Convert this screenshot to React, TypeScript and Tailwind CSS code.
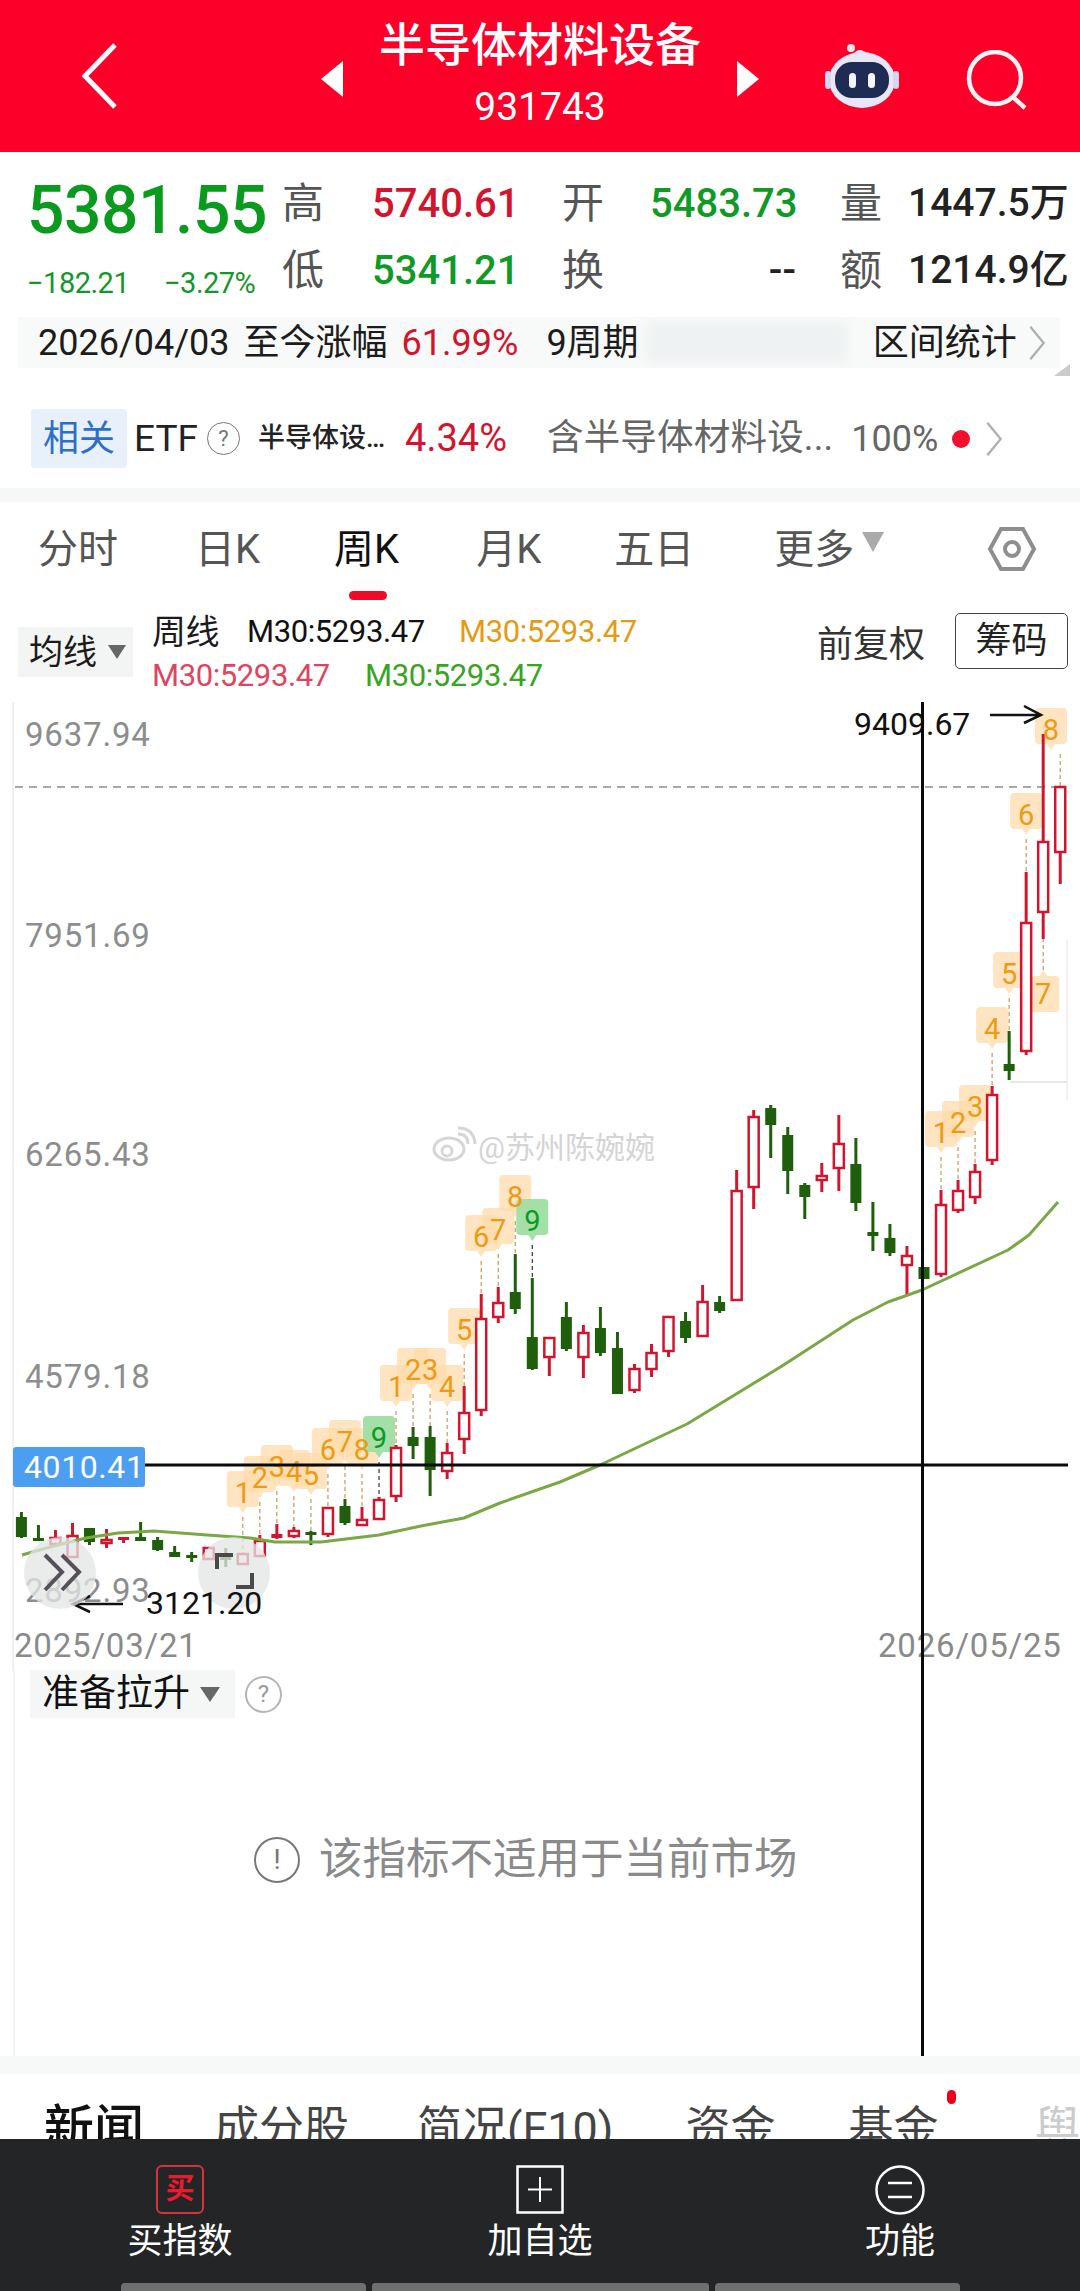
import React from "react";

type Candle = [number, number, number, number, "r" | "g"];

// wick top, body top, body bottom, wick bottom (page y)
const candles: Candle[] = [
  [1512, 1517, 1537, 1538, "g"], [1525, 1538, 1541, 1541, "g"], [1530, 1537, 1545, 1545, "r"], [1523, 1535, 1558, 1558, "r"],
  [1528, 1528, 1542, 1545, "g"], [1529, 1539, 1544, 1548, "r"], [1537, 1537, 1540, 1543, "r"], [1522, 1537, 1541, 1541, "g"],
  [1537, 1540, 1550, 1551, "g"], [1546, 1552, 1557, 1557, "g"], [1552, 1555, 1558, 1562, "g"], [1547, 1547, 1560, 1560, "r"],
  [1548, 1553, 1560, 1567, "g"], [1553, 1553, 1565, 1565, "r"], [1535, 1540, 1557, 1557, "r"], [1524, 1534, 1538, 1539, "r"],
  [1527, 1530, 1537, 1538, "r"], [1531, 1532, 1533, 1545, "g"], [1507, 1507, 1535, 1537, "r"], [1499, 1506, 1523, 1525, "g"],
  [1507, 1519, 1526, 1526, "r"], [1497, 1499, 1520, 1520, "r"], [1445, 1447, 1497, 1502, "r"], [1427, 1437, 1446, 1459, "g"],
  [1426, 1437, 1470, 1496, "g"], [1443, 1452, 1472, 1479, "r"], [1386, 1412, 1440, 1454, "r"], [1294, 1318, 1411, 1416, "r"],
  [1287, 1302, 1318, 1323, "r"], [1254, 1292, 1309, 1314, "g"], [1278, 1337, 1369, 1370, "g"], [1337, 1337, 1358, 1376, "r"],
  [1302, 1317, 1349, 1351, "g"], [1325, 1332, 1358, 1378, "r"], [1307, 1328, 1353, 1356, "g"], [1332, 1348, 1394, 1394, "g"],
  [1364, 1368, 1391, 1393, "r"], [1344, 1352, 1370, 1377, "r"], [1316, 1316, 1352, 1357, "r"], [1312, 1321, 1338, 1343, "g"],
  [1285, 1301, 1337, 1337, "r"], [1296, 1302, 1311, 1313, "g"], [1170, 1190, 1301, 1301, "r"], [1110, 1116, 1188, 1209, "r"],
  [1105, 1108, 1125, 1158, "g"], [1127, 1135, 1171, 1194, "g"], [1183, 1185, 1197, 1219, "g"], [1163, 1175, 1181, 1192, "r"],
  [1115, 1143, 1169, 1191, "r"], [1138, 1164, 1203, 1211, "g"], [1202, 1232, 1236, 1251, "g"], [1224, 1238, 1253, 1256, "g"],
  [1246, 1255, 1266, 1294, "r"], [1267, 1267, 1279, 1279, "g"], [1190, 1204, 1275, 1277, "r"], [1180, 1190, 1211, 1213, "r"],
  [1164, 1171, 1198, 1204, "r"], [1086, 1094, 1161, 1165, "r"], [1031, 1064, 1071, 1080, "g"], [872, 922, 1052, 1055, "r"],
  [734, 841, 913, 939, "r"], [786, 786, 853, 884, "r"],
];

const candleX = (i: number) => 21.4 + 17.03 * i;

// candle index, badge centre y, digit, optional centre x
const badges: { i: number; y: number; d: number; x?: number; up?: boolean }[] = [
  { i: 13, y: 1493, d: 1 }, { i: 14, y: 1478, d: 2 }, { i: 15, y: 1467, d: 3 }, { i: 16, y: 1472, d: 4 },
  { i: 17, y: 1475, d: 5 }, { i: 18, y: 1450, d: 6 }, { i: 19, y: 1442, d: 7 }, { i: 20, y: 1450, d: 8 },
  { i: 21, y: 1438, d: 9 }, { i: 22, y: 1387, d: 1 }, { i: 23, y: 1370, d: 2 }, { i: 24, y: 1370, d: 3 },
  { i: 25, y: 1387, d: 4 }, { i: 26, y: 1330, d: 5 }, { i: 27, y: 1237, d: 6 }, { i: 28, y: 1230, d: 7 },
  { i: 29, y: 1197, d: 8 }, { i: 30, y: 1221, d: 9 }, { i: 54, y: 1133, d: 1 }, { i: 55, y: 1123, d: 2 },
  { i: 56, y: 1107, d: 3 }, { i: 57, y: 1029, d: 4 }, { i: 58, y: 974, d: 5 }, { i: 59, y: 815, d: 6 },
  { i: 60, y: 994, d: 7, up: true }, { i: 61, y: 730, d: 8, x: 1051 },
];

const maLine =
  "22,1555 50,1547 86,1538 118,1533 154,1531 207,1535 250,1538 275,1542 321,1542 379,1535 421,1526 464,1518 500,1503 560,1482 600,1465 687,1424 782,1366 853,1320 888,1302 922,1290 1008,1250 1029,1235 1058,1202";

const axis: [string, number][] = [
  ["9637.94", 746], ["7951.69", 947], ["6265.43", 1166], ["4579.18", 1388], ["2892.93", 1602],
];

function Badge({ x, y, green, up }: { x: number; y: number; green: boolean; up?: boolean }) {
  const fill = green ? "#a3dfa6" : "#fdd9a8";
  const d = up
    ? `M${x - 16} ${y - 14}q0-4 4-4h8l4-6 4 6h8q4 0 4 4v28q0 4-4 4h-24q-4 0-4-4z`
    : `M${x - 16} ${y - 18}q0-4 4-4h24q4 0 4 4v28q0 4-4 4h-8l-4 6-4-6h-8q-4 0-4-4z`;
  return <path d={d} fill={fill} opacity={green ? 1 : 0.72} />;
}

function Chart() {
  return (
    <svg className="block w-[1080px] h-[968px]" viewBox="0 702 1080 968">
      <line x1="13" y1="702" x2="13" y2="1670" stroke="#f0f0f0" strokeWidth="2" />
      <line x1="1067" y1="940" x2="1067" y2="1100" stroke="#f1f1f1" strokeWidth="2" />
      <line x1="1010" y1="1082" x2="1067" y2="1082" stroke="#e8e8e8" strokeWidth="2" />

      {/* watermark */}
      <g fill="none" stroke="#d6d6d6" strokeWidth="3">
        <ellipse cx="449" cy="1149" rx="15" ry="11" />
        <circle cx="447" cy="1151" r="5" />
        <path d="M458 1134q10 0 10 10M458 1128q16 0 17 16" />
      </g>
      <text x="478" y="1158" fontSize="30" fill="#d4d4d4">@苏州陈婉婉</text>

      {axis.map(([t, y]) => (
        <text key={t} x="25" y={y} fontSize="33" fill="#8d8d8d" letterSpacing="0.8">{t}</text>
      ))}

      <line x1="15" y1="787" x2="1065" y2="787" stroke="#a8a8a8" strokeWidth="2" strokeDasharray="8 6" />

      {badges.map((b, n) => (
        <Badge key={n} x={b.x ?? candleX(b.i)} y={b.y} green={b.d === 9} up={b.up} />
      ))}

      {badges.map((b, n) => {
        const x = candleX(b.i);
        const c = candles[b.i];
        const from = b.up ? b.y - 24 : b.y + 24;
        const to = b.up ? c[3] : c[0];
        return (
          <line key={n} x1={x} y1={from} x2={x} y2={to} stroke={b.d === 9 ? "#333" : "#c9975a"} strokeWidth="1.2" strokeDasharray="4 3" />
        );
      })}

      {candles.map(([wt, bt, bb, wb, kind], i) => {
        const x = candleX(i);
        const color = kind === "r" ? "#d2152f" : "#1f5f0c";
        const h = bb - bt;
        return (
          <g key={i}>
            <line x1={x} y1={wt} x2={x} y2={wb} stroke={color} strokeWidth="3" />
            {kind === "g" || h < 5 ? (
              <rect x={x - 5.5} y={bt} width="11" height={Math.max(h, 3)} fill={color} />
            ) : (
              <rect x={x - 5} y={bt + 1} width="10" height={h - 2} fill="#fff" stroke={color} strokeWidth="2.5" />
            )}
          </g>
        );
      })}

      <polyline points={maLine} fill="none" stroke="#7aa845" strokeWidth="3" strokeLinejoin="round" />

      {badges.map((b, n) => (
        <text
          key={n}
          x={b.x ?? candleX(b.i)}
          y={b.y + 10}
          fontSize="29"
          textAnchor="middle"
          fill={b.d === 9 ? "#0c9a22" : "#ee9a14"}
        >
          {b.d}
        </text>
      ))}

      <line x1="145" y1="1465" x2="1068" y2="1465" stroke="#0a0a0a" strokeWidth="3" />
      <rect x="13" y="1447" width="132" height="40" rx="3" fill="#4c9ef0" />
      <text x="24" y="1478" fontSize="32" fill="#fff" letterSpacing="0.6">4010.41</text>

      {/* high / low markers */}
      <text x="854" y="735" fontSize="32" fill="#111">9409.67</text>
      <path d="M990 715h50M1024 706l17 9-17 8" fill="none" stroke="#111" strokeWidth="2.5" />
      <path d="M73 1604h50M90 1596l-17 8 17 8" fill="none" stroke="#111" strokeWidth="2.5" />

      {/* scroll buttons */}
      <circle cx="60" cy="1573" r="36" fill="#e3e5e5" opacity="0.76" />
      <circle cx="234" cy="1573" r="36" fill="#e3e5e5" opacity="0.76" />
      <path d="M45 1555l17 17-17 18M62 1555l17 17-17 18" fill="none" stroke="#55505a" strokeWidth="4" />
      <path d="M217 1569v-14h16M252 1573v14h-16" fill="none" stroke="#4a4a4a" strokeWidth="4" />
      <text x="146" y="1614" fontSize="32" fill="#111">3121.20</text>

      <text x="14" y="1657" fontSize="33" fill="#8a8a8a" letterSpacing="0.8">2025/03/21</text>
      <text x="878" y="1657" fontSize="33" fill="#8a8a8a" letterSpacing="0.8">2026/05/25</text>
    </svg>
  );
}

function Chevron({ className }: { className: string }) {
  return (
    <svg className={className} viewBox="0 0 20 40" fill="none" stroke="#b0b0b0" strokeWidth="2.5">
      <path d="M3 3l14 17-14 17" />
    </svg>
  );
}

function Stat({ label, value, color }: { label: string; value: string; color: string }) {
  return (
    <>
      <span className="text-[42px] leading-[67px] text-[#555]">{label}</span>
      <span className={`text-[40px] leading-[67px] font-medium text-right pr-[44px] ${color}`}>{value}</span>
    </>
  );
}

export default function App() {
  return (
    <div className="relative w-[1080px] h-[2291px] overflow-hidden bg-white flex flex-col font-['Roboto','Noto_Sans_CJK_SC',sans-serif]">
      {/* header */}
      <div className="h-[152px] bg-[#fc0029] grid grid-cols-[300px_480px_300px] shrink-0">
        <div className="pl-[80px] flex items-center">
          <svg className="w-[38px] h-[68px]" viewBox="0 0 38 68" fill="none" stroke="#fff" strokeWidth="5">
            <path d="M35 3L5 34l30 31" />
          </svg>
        </div>
        <div className="flex items-center justify-center gap-[34px]">
          <div className="w-0 h-0 mt-[6px] border-y-[18px] border-y-transparent border-r-[22px] border-r-white" />
          <div className="flex flex-col items-center text-white w-[326px]">
            <span className="text-[46px] leading-[56px] font-medium whitespace-nowrap mt-[-4px]">半导体材料设备</span>
            <span className="text-[39px] leading-[48px] mt-[10px]">931743</span>
          </div>
          <div className="w-0 h-0 mt-[6px] border-y-[18px] border-y-transparent border-l-[22px] border-l-white" />
        </div>
        <div className="flex items-start pt-[43px] pl-[45px]">
          <svg className="w-[74px] h-[66px]" viewBox="0 0 74 66">
            <path d="M28 14q4-8 10-5 4 2 5 7" fill="none" stroke="#f3eaf5" strokeWidth="2.5" />
            <circle cx="26" cy="5" r="4" fill="#f6e6ec" />
            <ellipse cx="37" cy="37" rx="33" ry="28" fill="#e9e6f7" />
            <rect x="0" y="28" width="6" height="18" rx="3" fill="#d8d6ef" />
            <rect x="68" y="28" width="6" height="18" rx="3" fill="#d8d6ef" />
            <rect x="10" y="19" width="54" height="36" rx="17" fill="#1d2b55" />
            <rect x="24" y="30" width="7" height="15" rx="3.5" fill="#f4f4ff" />
            <rect x="43" y="30" width="7" height="15" rx="3.5" fill="#f4f4ff" />
          </svg>
          <svg className="w-[62px] h-[60px] ml-[67px] mt-[7px]" viewBox="0 0 62 60" fill="none" stroke="#fff4f4" strokeWidth="4.5">
            <circle cx="29" cy="28" r="26" />
            <path d="M47 47l12 11" />
          </svg>
        </div>
      </div>

      {/* quote */}
      <div className="h-[165px] flex shrink-0">
        <div className="w-[282px] shrink-0 pl-[27px] pt-[24px]">
          <div className="text-[66px] leading-[70px] font-medium text-[#0a9a1e] tracking-[-0.5px]">5381.55</div>
          <div className="flex mt-[19px] text-[29px] leading-[36px] text-[#15962a] tracking-[-0.5px]">
            <span className="w-[137px]">−182.21</span>
            <span>−3.27%</span>
          </div>
        </div>
        <div className="grid grid-cols-[90px_190px_88px_190px_68px_172px] auto-rows-[67px] pt-[18px] h-fit">
          <Stat label="高" value="5740.61" color="text-[#d3142e]" />
          <Stat label="开" value="5483.73" color="text-[#0f9a25]" />
          <span className="text-[42px] leading-[67px] text-[#555]">量</span>
          <span className="text-[39px] leading-[67px] font-medium text-[#222] whitespace-nowrap">1447.5万</span>
          <Stat label="低" value="5341.21" color="text-[#0f9a25]" />
          <Stat label="换" value="--" color="text-[#222]" />
          <span className="text-[42px] leading-[67px] text-[#555]">额</span>
          <span className="text-[39px] leading-[67px] font-medium text-[#222] whitespace-nowrap">1214.9亿</span>
        </div>
      </div>

      {/* range stats */}
      <div className="relative ml-[18px] w-[1042px] h-[51px] bg-[#f8f9f9] flex items-center pl-[20px] shrink-0 text-[36px] text-[#1c1c1c] whitespace-nowrap">
        <span>2026/04/03</span>
        <span className="ml-[14px]">至今涨幅</span>
        <span className="ml-[14px] text-[#d3142e]">61.99%</span>
        <span className="ml-[28px]">9周期</span>
        <div className="ml-[8px] w-[200px] h-[40px] bg-[#eff2f2] blur-[4px]" />
        <span className="ml-[26px]">区间统计</span>
        <Chevron className="w-[20px] h-[38px] ml-[10px]" />
        <div className="absolute right-[-10px] bottom-[-8px] w-0 h-0 border-l-[16px] border-l-transparent border-b-[12px] border-b-[#c9cccc]" />
      </div>

      {/* related etf */}
      <div className="h-[120px] flex items-start pt-[41px] pl-[31px] shrink-0 whitespace-nowrap">
        <div className="w-[96px] h-[59px] bg-[#e8f1fb] rounded-[3px] flex items-center justify-center text-[36px] text-[#2b70c8]">相关</div>
        <div className="h-[59px] flex items-center">
          <span className="ml-[7px] text-[37px] text-[#222]">ETF</span>
          <span className="ml-[9px] w-[33px] h-[33px] rounded-full border border-[#777] flex items-center justify-center text-[22px] text-[#777]">?</span>
          <span className="ml-[18px] text-[27px] font-medium text-[#222]">半导体设…</span>
          <span className="ml-[20px] text-[38px] text-[#d3142e]">4.34%</span>
          <span className="ml-[40px] text-[36.5px] text-[#666] tracking-[0.2px]">含半导体材料设...</span>
          <span className="ml-[18px] text-[36px] text-[#666]">100%</span>
          <span className="ml-[14px] w-[18px] h-[18px] rounded-full bg-[#f00f2d]" />
          <Chevron className="w-[20px] h-[38px] ml-[14px]" />
        </div>
      </div>

      <div className="h-[14px] bg-[#f6f7f7] shrink-0" />

      {/* period tabs */}
      <div className="relative h-[108px] flex items-start pt-[20px] shrink-0 text-[40px] leading-[56px] text-[#555] whitespace-nowrap">
        <span className="ml-[38px]">分时</span>
        <span className="ml-[77px]">日K</span>
        <span className="ml-[74px] text-[#111]">周K</span>
        <span className="ml-[77px]">月K</span>
        <span className="ml-[73px]">五日</span>
        <span className="ml-[80px]">更多</span>
        <div className="ml-[8px] mt-[10px] w-0 h-0 border-x-[11px] border-x-transparent border-t-[20px] border-t-[#aaa]" />
        <svg className="ml-[103px] mt-[4px] w-[50px] h-[46px]" viewBox="0 0 50 46" fill="none" stroke="#8e8e8e" strokeWidth="4">
          <path d="M14 3h22l11 20-11 20H14L3 23z" />
          <circle cx="25" cy="23" r="7" />
        </svg>
        <div className="absolute left-[349px] top-[89px] w-[38px] h-[9px] rounded-full bg-[#f00a25]" />
      </div>

      {/* legend */}
      <div className="h-[92px] flex items-start shrink-0 whitespace-nowrap">
        <div className="ml-[18px] mt-[17px] w-[115px] h-[50px] bg-[#f3f5f4] flex items-center pl-[11px]">
          <span className="text-[34px] text-[#1b1b1b]">均线</span>
          <div className="ml-[11px] w-0 h-0 border-x-[9px] border-x-transparent border-t-[14px] border-t-[#666]" />
        </div>
        <div className="ml-[19px] flex flex-col text-[31px] leading-[44px] tracking-[-0.4px]">
          <div className="flex">
            <span className="text-[34px] text-[#1b1b1b] w-[95px]">周线</span>
            <span className="text-[#111] w-[212px]">M30:5293.47</span>
            <span className="text-[#e59a13]">M30:5293.47</span>
          </div>
          <div className="flex">
            <span className="text-[#dc4660] w-[213px]">M30:5293.47</span>
            <span className="text-[#3aa31f]">M30:5293.47</span>
          </div>
        </div>
        <span className="ml-auto mt-[14px] text-[36px] leading-[42px] text-[#333]">前复权</span>
        <div className="ml-[30px] mr-[12px] mt-[3px] w-[113px] h-[56px] border border-[#444] rounded-[5px] flex items-center justify-center text-[36px] text-[#222]">筹码</div>
      </div>

      {/* chart + indicator */}
      <div className="relative shrink-0">
        <Chart />
        <div className="h-[386px] border-l-2 border-[#f3f3f3] ml-[13px] pl-[15px]">
          <div className="flex items-center">
            <div className="w-[205px] h-[48px] bg-[#f5f6f6] flex items-center pl-[12px]">
              <span className="text-[37px] text-[#111] whitespace-nowrap">准备拉升</span>
              <div className="ml-[10px] w-0 h-0 border-x-[10px] border-x-transparent border-t-[15px] border-t-[#666]" />
            </div>
            <span className="ml-[10px] w-[37px] h-[37px] rounded-full border-2 border-[#b5b5b5] flex items-center justify-center text-[24px] text-[#999]">?</span>
          </div>
          <div className="flex items-center mt-[114px] ml-[224px]">
            <span className="w-[46px] h-[46px] rounded-full border-2 border-[#777] flex items-center justify-center text-[28px] text-[#777]">!</span>
            <span className="ml-[19px] text-[43.5px] leading-[56px] text-[#8a8a8a] whitespace-nowrap">该指标不适用于当前市场</span>
          </div>
        </div>
        <div className="absolute left-[920.5px] top-0 w-[3px] h-[1354px] bg-[#0a0a0a]" />
      </div>

      <div className="h-[18px] bg-[#f7f8f8] shrink-0" />

      {/* info tabs, cut off by the bar */}
      <div className="h-[65px] overflow-hidden flex items-start pt-[24px] shrink-0 text-[#444] text-[45px] leading-[62px] whitespace-nowrap">
        <span className="ml-[44px] font-medium text-[#111] text-[50px]">新闻</span>
        <span className="ml-[70px]">成分股</span>
        <span className="ml-[68px]">简况(F10)</span>
        <span className="ml-[72px]">资金</span>
        <span className="ml-[73px]">基金</span>
        <span className="ml-[8px] w-[10px] h-[14px] rounded-full bg-[#e8001e] mt-[-8px]" />
        <span className="ml-[79px] text-[#ccc]">舆</span>
      </div>

      {/* bottom bar */}
      <div className="flex-1 bg-[#232526] flex flex-col">
        <div className="grid grid-cols-3 text-white text-[35px] leading-[44px] text-center pt-[26px]">
          <div className="flex flex-col items-center">
            <div className="w-[48px] h-[49px] border-2 border-[#d8323f] rounded-[6px] flex items-center justify-center text-[29px] leading-none font-bold text-[#ea1a30]">买</div>
            <span className="mt-[6px]">买指数</span>
          </div>
          <div className="flex flex-col items-center">
            <svg className="w-[48px] h-[49px]" viewBox="0 0 48 49" fill="none" stroke="#fff" strokeWidth="2.5">
              <rect x="1.5" y="1.5" width="45" height="46" />
              <path d="M24 12v25M12 24.5h24" strokeWidth="2" />
            </svg>
            <span className="mt-[6px]">加自选</span>
          </div>
          <div className="flex flex-col items-center">
            <svg className="w-[50px] h-[50px]" viewBox="0 0 50 50" fill="none" stroke="#fff" strokeWidth="2.5">
              <circle cx="25" cy="25" r="23.5" />
              <path d="M13 18h24M13 32h24" />
            </svg>
            <span className="mt-[5px]">功能</span>
          </div>
        </div>
        <div className="mt-auto flex justify-center gap-[6px]">
          <div className="w-[245px] h-[8px] bg-[#6e6f6f] rounded-t-[4px]" />
          <div className="w-[337px] h-[8px] bg-[#6e6f6f] rounded-t-[3px]" />
          <div className="w-[245px] h-[8px] bg-[#6e6f6f] rounded-t-[4px]" />
        </div>
      </div>
    </div>
  );
}
